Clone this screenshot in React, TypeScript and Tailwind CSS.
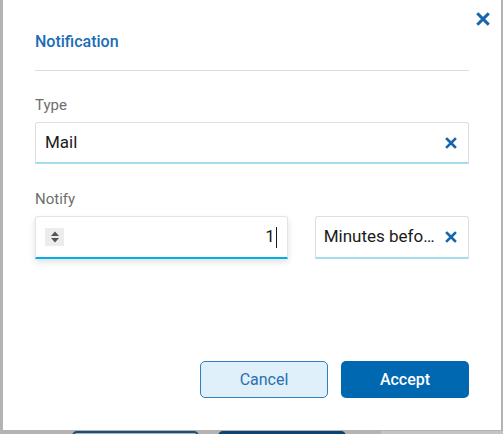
import React from "react";

function XIcon({ className = "" }: { className?: string }) {
  return (
    <svg viewBox="0 0 12 12" className={className} fill="none" stroke="currentColor" strokeWidth={2.6} strokeLinecap="square">
      <path d="M2 2L10 10M10 2L2 10" />
    </svg>
  );
}

export default function App() {
  return (
    <div className="relative h-[434px] w-[503px] overflow-hidden bg-[#b3b3b3] font-['Roboto',sans-serif]">
      {/* page behind the overlay */}
      <div className="absolute left-[72px] top-[431px] h-[10px] w-[127px] rounded-t-[5px] border-2 border-[#1c4f78] bg-[#a9b3bb]" />
      <div className="absolute left-[218px] top-[431px] h-[10px] w-[128px] rounded-t-[5px] bg-[#0b4473]" />
      <div className="absolute left-[381px] top-[431px] h-[4px] w-[122px] bg-[#c4c4c4]" />

      <div className="absolute left-[3px] top-0 flex h-[430px] w-[498px] flex-col bg-white">
        <div className="flex h-[70px] items-start px-[32px] pt-[32px]">
          <h2 className="text-[16px] leading-[20px] font-medium text-[#1b6cb7]">Notification</h2>
        </div>
        <button className="absolute right-[11px] top-[12px] text-[#1766ad]">
          <XIcon className="h-[14px] w-[14px]" />
        </button>
        <div className="mx-[32px] border-t border-[#dcdcdc]" />

        <div className="px-[32px] pt-[25px]">
          <label className="block text-[15px] leading-[18px] text-[#6e6e6e]">Type</label>
          <div className="mt-[8px] flex h-[42px] items-center justify-between rounded-t-[3px] border border-b-2 border-[#dfdfdf] border-b-[#a7dcef] pl-[9px] pr-[11px]">
            <span className="text-[17px] text-[#1a1a1a]">Mail</span>
            <XIcon className="h-[12px] w-[12px] text-[#1766ad]" />
          </div>

          <label className="mt-[26px] block text-[15px] leading-[18px] text-[#6e6e6e]">Notify</label>
          <div className="mt-[8px] flex gap-[27px]">
            <div className="flex h-[43px] w-[254px] items-center justify-between rounded-t-[3px] border border-b-2 border-[#e3e3e3] border-b-[#00aeea] pl-[9px] pr-[10px] shadow-[0_3px_6px_rgba(0,0,0,0.12)]">
              <div className="flex h-[18px] w-[19px] items-center justify-center bg-[#ececec]">
                <svg viewBox="0 0 10 12" className="h-[12px] w-[10px]" fill="#555">
                  <path d="M5 0.5L9 5H1Z M5 11.5L1 7H9Z" />
                </svg>
              </div>
              <span className="flex items-center text-[17px] text-[#1a1a1a]">
                1<span className="ml-[1px] inline-block h-[21px] w-px bg-[#1a1a1a]" />
              </span>
            </div>
            <div className="flex h-[43px] w-[155px] items-center justify-between rounded-t-[3px] border border-b-2 border-[#dfdfdf] border-b-[#a7dcef] pl-[8px] pr-[11px]">
              <span className="whitespace-nowrap text-[17px] text-[#1a1a1a]">Minutes befo…</span>
              <XIcon className="h-[12px] w-[12px] shrink-0 text-[#1766ad]" />
            </div>
          </div>
        </div>

        <div className="mt-auto flex justify-end gap-[13px] px-[32px] pb-[32px]">
          <button className="h-[37px] w-[128px] rounded-[5px] border border-[#2f7fc1] bg-[#e0f0fa] text-[16px] text-[#2b6fae]">
            Cancel
          </button>
          <button className="h-[37px] w-[128px] rounded-[5px] bg-[#0067b1] text-[16px] font-medium text-white">
            Accept
          </button>
        </div>
      </div>
    </div>
  );
}
